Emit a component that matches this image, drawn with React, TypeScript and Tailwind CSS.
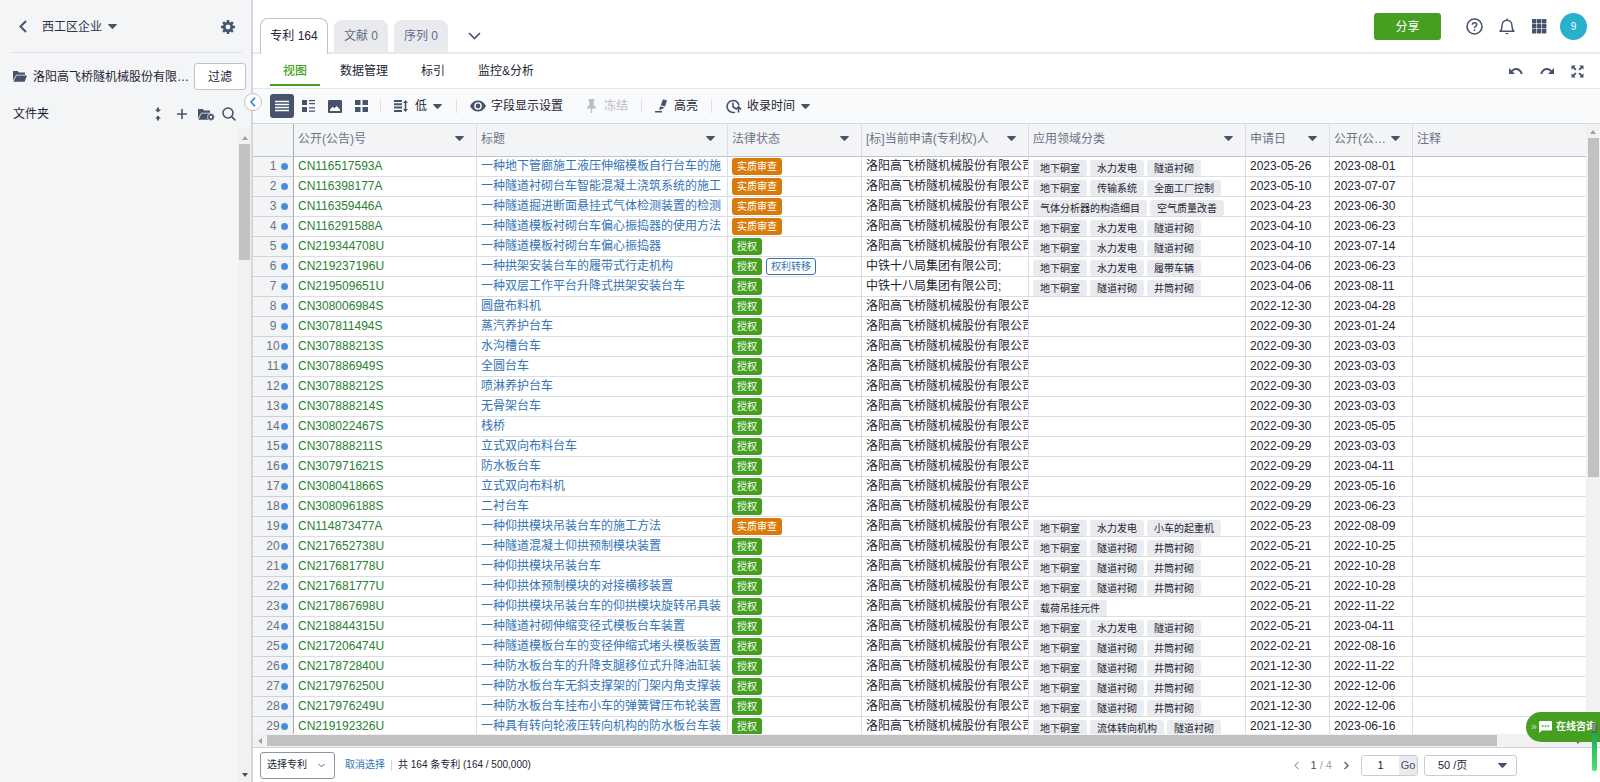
import { ReactNode } from 'react';
import { ChevronDown, ChevronLeft, ChevronRight } from 'lucide-react';

type Status = '实质审查' | '授权';

type Patent = {
  no: string;
  title: string;
  status: Status;
  transferred?: boolean;
  applicant: string;
  fields: string[];
  applied: string;
  published: string;
};

const GAOFEI = '洛阳高飞桥隧机械股份有限公司';
const CRCC = '中铁十八局集团有限公司;';

const ROOM = '地下硐室';
const HYDRO = '水力发电';
const LINING = '隧道衬砌';
const SHAFT = '井筒衬砌';

function patent(
  no: string,
  title: string,
  applied: string,
  published: string,
  fields: string[] = [],
  extra: Partial<Patent> = {},
): Patent {
  return { no, title, applied, published, fields, status: '授权', applicant: GAOFEI, ...extra };
}

const patents: Patent[] = [
  patent('CN116517593A', '一种地下管廊施工液压伸缩模板自行台车的施', '2023-05-26', '2023-08-01', [ROOM, HYDRO, LINING], { status: '实质审查' }),
  patent('CN116398177A', '一种隧道衬砌台车智能混凝土浇筑系统的施工', '2023-05-10', '2023-07-07', [ROOM, '传输系统', '全面工厂控制'], { status: '实质审查' }),
  patent('CN116359446A', '一种隧道掘进断面悬挂式气体检测装置的检测', '2023-04-23', '2023-06-30', ['气体分析器的构造细目', '空气质量改善'], { status: '实质审查' }),
  patent('CN116291588A', '一种隧道模板衬砌台车偏心振捣器的使用方法', '2023-04-10', '2023-06-23', [ROOM, HYDRO, LINING], { status: '实质审查' }),
  patent('CN219344708U', '一种隧道模板衬砌台车偏心振捣器', '2023-04-10', '2023-07-14', [ROOM, HYDRO, LINING]),
  patent('CN219237196U', '一种拱架安装台车的履带式行走机构', '2023-04-06', '2023-06-23', [ROOM, HYDRO, '履带车辆'], { transferred: true, applicant: CRCC }),
  patent('CN219509651U', '一种双层工作平台升降式拱架安装台车', '2023-04-06', '2023-08-11', [ROOM, LINING, SHAFT], { applicant: CRCC }),
  patent('CN308006984S', '圆盘布料机', '2022-12-30', '2023-04-28'),
  patent('CN307811494S', '蒸汽养护台车', '2022-09-30', '2023-01-24'),
  patent('CN307888213S', '水沟槽台车', '2022-09-30', '2023-03-03'),
  patent('CN307886949S', '全圆台车', '2022-09-30', '2023-03-03'),
  patent('CN307888212S', '喷淋养护台车', '2022-09-30', '2023-03-03'),
  patent('CN307888214S', '无骨架台车', '2022-09-30', '2023-03-03'),
  patent('CN308022467S', '栈桥', '2022-09-30', '2023-05-05'),
  patent('CN307888211S', '立式双向布料台车', '2022-09-29', '2023-03-03'),
  patent('CN307971621S', '防水板台车', '2022-09-29', '2023-04-11'),
  patent('CN308041866S', '立式双向布料机', '2022-09-29', '2023-05-16'),
  patent('CN308096188S', '二衬台车', '2022-09-29', '2023-06-23'),
  patent('CN114873477A', '一种仰拱模块吊装台车的施工方法', '2022-05-23', '2022-08-09', [ROOM, HYDRO, '小车的起重机'], { status: '实质审查' }),
  patent('CN217652738U', '一种隧道混凝土仰拱预制模块装置', '2022-05-21', '2022-10-25', [ROOM, LINING, SHAFT]),
  patent('CN217681778U', '一种仰拱模块吊装台车', '2022-05-21', '2022-10-28', [ROOM, LINING, SHAFT]),
  patent('CN217681777U', '一种仰拱体预制模块的对接横移装置', '2022-05-21', '2022-10-28', [ROOM, LINING, SHAFT]),
  patent('CN217867698U', '一种仰拱模块吊装台车的仰拱模块旋转吊具装', '2022-05-21', '2022-11-22', ['载荷吊挂元件']),
  patent('CN218844315U', '一种隧道衬砌伸缩变径式模板台车装置', '2022-05-21', '2023-04-11', [ROOM, HYDRO, LINING]),
  patent('CN217206474U', '一种隧道模板台车的变径伸缩式堵头模板装置', '2022-02-21', '2022-08-16', [ROOM, LINING, SHAFT]),
  patent('CN217872840U', '一种防水板台车的升降支腿移位式升降油缸装', '2021-12-30', '2022-11-22', [ROOM, LINING, SHAFT]),
  patent('CN217976250U', '一种防水板台车无斜支撑架的门架内角支撑装', '2021-12-30', '2022-12-06', [ROOM, LINING, SHAFT]),
  patent('CN217976249U', '一种防水板台车挂布小车的弹簧臂压布轮装置', '2021-12-30', '2022-12-06', [ROOM, LINING, SHAFT]),
  patent('CN219192326U', '一种具有转向轮液压转向机构的防水板台车装', '2021-12-30', '2023-06-16', [ROOM, '流体转向机构', LINING]),
];

const columns = [
  { label: '公开(公告)号', sortable: true },
  { label: '标题', sortable: true },
  { label: '法律状态', sortable: true },
  { label: '[标]当前申请(专利权)人', sortable: true },
  { label: '应用领域分类', sortable: true },
  { label: '申请日', sortable: true },
  { label: '公开(公…', sortable: true },
  { label: '注释', sortable: false },
];

function Caret() {
  return (
    <svg width="9" height="5" viewBox="0 0 9 5" className="shrink-0" fill="#47536d">
      <path d="M.8 0h7.4c.6 0 .8.6.4 1L5.2 4.6c-.4.4-1 .4-1.4 0L.4 1C0 .6.2 0 .8 0z" />
    </svg>
  );
}

function IconButton({ label, className = '', children }: { label: string; className?: string; children: ReactNode }) {
  return (
    <button type="button" aria-label={label} className={`flex shrink-0 items-center justify-center text-[#47536d] ${className}`}>
      {children}
    </button>
  );
}

function GearIcon() {
  return (
    <svg width="14" height="14" viewBox="0 0 14 14">
      <circle cx="7" cy="7" r="3.8" fill="none" stroke="currentColor" strokeWidth="2.8" />
      <g stroke="currentColor" strokeWidth="2.6">
        <path d="M7 0v2.4M7 11.6V14M0 7h2.4M11.6 7H14M2.1 2.1l1.6 1.6M10.3 10.3l1.6 1.6M11.9 2.1l-1.6 1.6M3.7 10.3l-1.6 1.6" />
      </g>
    </svg>
  );
}

function FolderOpenIcon({ gear = false }: { gear?: boolean }) {
  return (
    <svg width={gear ? 17 : 14} height="13" viewBox={gear ? '0 0 17 13' : '0 0 14 13'} fill="currentColor">
      <path d="M0 1h4.800l1.200 1.500H12v2.300H3.200L0 10.500z" />
      <path d="M3.500 5.500H14l-2.400 6.300H.4z" />
      {gear && (
        <>
          <circle cx="13" cy="9" r="3.800" fill="#f4f5f7" />
          <circle cx="13" cy="9" r="2" fill="none" stroke="currentColor" strokeWidth="1.500" />
          <path
            d="M13 5.600v1.200M13 11.200v1.200M9.600 9h1.200M15.200 9h1.200M10.600 6.600l.9.9M14.500 10.500l.9.9M15.400 6.600l-.9.9M11.500 10.500l-.9.9"
            stroke="currentColor"
            strokeWidth="1.400"
          />
        </>
      )}
    </svg>
  );
}

function Sidebar() {
  return (
    <aside className="relative flex w-[253px] shrink-0 flex-col border-r-2 border-[#d3d6dc] bg-[#f4f5f7]">
      <div className="ml-[11px] mr-[9px] flex h-[53px] shrink-0 items-center border-b border-[#dfe1e5] pl-1 pr-[7px] pt-px">
        <IconButton label="返回" className="w-4">
          <svg width="8" height="13" viewBox="0 0 8 13" fill="none" stroke="currentColor" strokeWidth="2">
            <path d="M7 1L1.5 6.500 7 12" />
          </svg>
        </IconButton>
        <button type="button" className="ml-[11px] flex items-center gap-[6px] text-[#2b3448]">
          西工区企业
          <Caret />
        </button>
        <IconButton label="设置" className="ml-auto">
          <GearIcon />
        </IconButton>
      </div>

      <div className="mt-[10px] flex h-[27px] shrink-0 items-center pl-[13px] pr-[5px]">
        <span className="text-[#47536d]"><FolderOpenIcon /></span>
        <span className="ml-[6px] flex-1 whitespace-nowrap text-[#1d2433]">洛阳高飞桥隧机械股份有限…</span>
        <button type="button" className="h-[27px] w-[52px] rounded-[3px] border border-[#bfc3cc] bg-white text-[#1d2433]">
          过滤
        </button>
      </div>

      <div className="mt-[10px] flex h-7 shrink-0 items-center pl-[13px] pr-[15px] text-[#1d2433]">
        文件夹
        <div className="ml-auto flex items-center">
          <IconButton label="折叠全部" className="mr-[14px]">
            <svg width="8" height="14" viewBox="0 0 8 14" fill="currentColor">
              <path d="M4 5.500L1 2.500h2V.5h2v2h2zM4 8.500l3 3H5v2H3v-2H1z" />
            </svg>
          </IconButton>
          <IconButton label="新建文件夹" className="mr-[10px]">
            <svg width="12" height="12" viewBox="0 0 12 12" stroke="currentColor" strokeWidth="1.600">
              <path d="M6 1v10M1 6h10" />
            </svg>
          </IconButton>
          <IconButton label="管理文件夹" className="mr-[7px]">
            <FolderOpenIcon gear />
          </IconButton>
          <IconButton label="搜索">
            <svg width="14" height="14" viewBox="0 0 14 14" fill="none" stroke="currentColor" strokeWidth="1.600">
              <circle cx="6" cy="6" r="5" />
              <path d="M9.600 9.600l3.800 3.800" />
            </svg>
          </IconButton>
        </div>
      </div>

      {/* folder tree scrollbar */}
      <div className="ml-auto flex w-[13px] flex-1 flex-col items-center bg-[#f1f1f1] pb-[5px] pt-1">
        <svg width="6" height="4" viewBox="0 0 6 4" fill="#a0a0a0" className="mt-1"><path d="M3 0l3 4H0z" /></svg>
        <div className="mt-1 h-[116px] w-[11px] bg-[#c1c1c1]" />
        <svg width="6" height="4" viewBox="0 0 6 4" fill="#505050" className="mt-auto"><path d="M3 4l3-4H0z" /></svg>
      </div>

      <button
        type="button"
        aria-label="收起侧栏"
        className="absolute -right-[11px] top-[93px] z-10 flex h-[18px] w-[18px] items-center justify-center rounded-full border border-[#bfc3cc] bg-white text-[#2d7cc7]"
      >
        <svg width="6" height="10" viewBox="0 0 6 10" fill="none" stroke="currentColor" strokeWidth="1.600">
          <path d="M5 .8L1 5l4 4.200" />
        </svg>
      </button>
    </aside>
  );
}

function TopBar() {
  return (
    <header className="flex h-[54px] shrink-0 items-end justify-between border-b-2 border-[#e8e9ec] pl-[7px] pr-[13px]">
      <nav className="-mb-[2px] flex items-end">
        <button type="button" className="h-9 w-[68px] rounded-t-lg border border-b-0 border-[#bfc3cc] bg-white pb-[2px] text-[#1d2433]">
          专利 164
        </button>
        <button type="button" className="mb-[2px] ml-[6px] h-8 w-[54px] rounded-t-lg bg-[#e9eaee] text-[#616c84]">
          文献 0
        </button>
        <button type="button" className="mb-[2px] ml-[6px] h-8 w-[54px] rounded-t-lg bg-[#e9eaee] text-[#616c84]">
          序列 0
        </button>
        <IconButton label="更多" className="mb-[2px] ml-5 h-8">
          <svg width="13" height="8" viewBox="0 0 13 8" fill="none" stroke="currentColor" strokeWidth="1.700">
            <path d="M1 1l5.500 5.500L12 1" />
          </svg>
        </IconButton>
      </nav>

      <div className="flex h-[52px] items-center pt-px">
        <button type="button" className="mr-[25px] h-[27px] w-[67px] rounded-[3px] bg-[#45a022] text-white">
          分享
        </button>
        <IconButton label="帮助" className="mr-4">
          <svg width="17" height="17" viewBox="0 0 17 17" fill="none" stroke="currentColor" strokeWidth="1.600">
            <circle cx="8.500" cy="8.500" r="7.500" />
            <path d="M6.300 6.800c0-1.300 1-2.100 2.200-2.100s2.200.8 2.200 2c0 1.500-2.200 1.700-2.200 3.300M8.500 11.300v1.500" />
          </svg>
        </IconButton>
        <IconButton label="通知" className="mr-[17px]">
          <svg width="16" height="17" viewBox="0 0 16 17" fill="none" stroke="currentColor" strokeWidth="1.500">
            <path d="M8 .5V2M1 13.300h14c-1.500-1.200-2-2.500-2-5.300C13 4.600 11 2.200 8 2.200S3 4.600 3 8c0 2.800-.5 4.100-2 5.300z" strokeLinejoin="round" />
            <path d="M6 15h4l-2 1.500z" fill="currentColor" stroke="none" />
          </svg>
        </IconButton>
        <IconButton label="应用" className="mr-[13px]">
          <svg width="15" height="15" viewBox="0 0 15 15" fill="currentColor">
            {[0, 5, 10].map((y) => [0, 5, 10].map((x) => <rect key={`${x}-${y}`} x={x} y={y} width="4.400" height="4.400" rx=".6" />))}
          </svg>
        </IconButton>
        <button type="button" className="h-[27px] w-[27px] rounded-full bg-[#27b1ca] text-[10px] text-white">9</button>
      </div>
    </header>
  );
}

function SubTabs() {
  return (
    <div className="flex h-[35px] shrink-0 items-stretch justify-between border-b border-[#e4e6ea] pl-[17px] pr-4 text-[#1d2433]">
      <nav className="flex gap-[7px]">
        <button type="button" className="mb-[2px] border-b-2 border-[#45a022] px-[13px] pt-1 font-medium text-[#45a022]">视图</button>
        <button type="button" className="px-[13px]">数据管理</button>
        <button type="button" className="px-[13px]">标引</button>
        <button type="button" className="px-[13px]">监控&amp;分析</button>
      </nav>
      <div className="flex items-center">
        <IconButton label="撤销" className="mr-[17px]">
          <svg width="14" height="8" viewBox="0 0 14 8">
            <path d="M2.500 4.500C5 1 10.500.6 12.800 7" fill="none" stroke="currentColor" strokeWidth="2" />
            <path d="M0 1v6h6z" fill="currentColor" />
          </svg>
        </IconButton>
        <IconButton label="重做" className="mr-[17px]">
          <svg width="14" height="8" viewBox="0 0 14 8">
            <path d="M11.500 4.500C9 1 3.500.6 1.200 7" fill="none" stroke="currentColor" strokeWidth="2" />
            <path d="M14 1v6H8z" fill="currentColor" />
          </svg>
        </IconButton>
        <IconButton label="全屏">
          <svg width="13" height="13" viewBox="0 0 13 13" fill="currentColor">
            <path d="M.5.5h4.200L3.300 1.900l2.300 2.300-1.400 1.400-2.300-2.300L.5 4.700zM12.500.5v4.200l-1.400-1.400-2.300 2.300-1.400-1.400 2.300-2.300L8.300.5zM.5 12.500V8.300l1.400 1.400 2.300-2.300 1.400 1.400-2.300 2.300 1.400 1.400zM12.500 12.500H8.300l1.400-1.400-2.300-2.300 1.400-1.400 2.300 2.300 1.400-1.400z" />
          </svg>
        </IconButton>
      </div>
    </div>
  );
}

function Divider({ className = '' }: { className?: string }) {
  return <span className={`h-[14px] w-px shrink-0 bg-[#dfe1e5] ${className}`} />;
}

function Toolbar() {
  return (
    <div className="flex h-[34px] shrink-0 items-center bg-[#f9fafc] pl-[17px] text-[#1d2433]">
      <button type="button" aria-label="列表视图" className="flex h-6 w-6 items-center justify-center rounded-[3px] bg-[#47536d]">
        <svg width="14" height="13" viewBox="0 0 14 13" stroke="#fff" strokeWidth="1.300">
          <path d="M0 1.500h14M0 4.500h14M0 7.500h14M0 10.500h14" />
        </svg>
      </button>
      <IconButton label="图文视图" className="ml-2">
        <svg width="13" height="12" viewBox="0 0 13 12" fill="currentColor">
          <path d="M0 0h5v5H0zM0 7h5v5H0zM7 0h6v1.300H7zM7 3h6v1.300H7zM7 7.300h6v1.300H7zM7 10.500h6v1.300H7z" />
        </svg>
      </IconButton>
      <IconButton label="图片视图" className="ml-[13px]">
        <svg width="14" height="13" viewBox="0 0 14 13">
          <rect width="14" height="13" rx="1.200" fill="currentColor" />
          <path d="M2 11V9.500l2.500-2.800 1.800 1.500L8.700 6 12 9.500V11z" fill="#fff" />
        </svg>
      </IconButton>
      <IconButton label="网格视图" className="ml-[13px]">
        <svg width="13" height="12" viewBox="0 0 13 12" fill="currentColor">
          <path d="M0 0h5.500v5H0zM7.500 0H13v5H7.500zM0 7h5.500v5H0zM7.500 7H13v5H7.500z" />
        </svg>
      </IconButton>
      <Divider className="ml-3" />
      <button type="button" className="ml-[13px] flex items-center">
        <svg width="14" height="12" viewBox="0 0 14 12" fill="#47536d">
          <path d="M0 0h8v2H0zM0 3.300h8v2H0zM0 6.600h8v2H0zM0 10h8v2H0zM11.500 0L14 3h-1.700v6H14l-2.500 3L9 9h1.700V3H9z" />
        </svg>
        <span className="ml-[7px] mr-[6px]">低</span>
        <Caret />
      </button>
      <Divider className="ml-[14px]" />
      <button type="button" className="ml-[13px] flex items-center">
        <svg width="16" height="12" viewBox="0 0 16 12">
          <path d="M0 6C2 2.200 4.800.5 8 .5s6 1.700 8 5.500c-2 3.800-4.800 5.500-8 5.500S2 9.800 0 6z" fill="#47536d" />
          <circle cx="8" cy="6" r="3.100" fill="#47536d" stroke="#fff" strokeWidth="1.400" />
        </svg>
        <span className="ml-[5px]">字段显示设置</span>
      </button>
      <button type="button" disabled className="ml-6 flex items-center text-[#b9bdc6]">
        <svg width="9" height="14" viewBox="0 0 9 14" fill="currentColor">
          <path d="M1.500 0h6v1.500h-.8V6L9 8.500v1H5.200V14H3.800V9.500H0v-1L2.300 6V1.500h-.8z" />
        </svg>
        <span className="ml-2">冻结</span>
      </button>
      <Divider className="ml-[13px]" />
      <button type="button" className="ml-[13px] flex items-center">
        <svg width="13" height="14" viewBox="0 0 13 14" fill="#47536d">
          <path d="M8 .3l4 1.200-2 6-4.200-1.200zM5.400 7.200l4 1.200-1.900 1.300-1.900 1-1.600-.5zM0 12h7v1.600H0z" />
        </svg>
        <span className="ml-[6px]">高亮</span>
      </button>
      <Divider className="ml-[13px]" />
      <button type="button" className="ml-[14px] flex items-center">
        <svg width="16" height="15" viewBox="0 0 16 15" fill="none" stroke="#47536d" strokeWidth="1.600">
          <path d="M9 13.200A6 6 0 1 1 13 6.500" />
          <path d="M7 3.500V8l3 1.800" />
          <path d="M12.500 13.500V8.500M9.800 10.500l2.700-2.700 2.700 2.700" />
        </svg>
        <span className="ml-[5px] mr-[6px]">收录时间</span>
        <Caret />
      </button>
    </div>
  );
}

function StatusBadge({ status }: { status: Status }) {
  return (
    <span
      className={`inline-flex h-[17px] items-center rounded-[3px] px-[5px] text-[10px] text-white ${
        status === '授权' ? 'bg-[#45a022]' : 'bg-[#d97b0b]'
      }`}
    >
      {status}
    </span>
  );
}

function PatentRow({ index, patent }: { index: number; patent: Patent }) {
  const cell = 'h-5 overflow-hidden whitespace-nowrap border-b border-r border-[#dcdee3] p-0 pl-1 leading-[19px] align-top';
  return (
    <tr>
      <th scope="row" className="h-5 border-b border-r border-b-[#cfd2d8] border-r-[#a9adb6] bg-[#f3f4f6] p-0 align-top font-normal leading-[19px] text-[#6b7280]">
        <span className="flex items-center justify-end pr-[5px]">
          <span className="w-4 text-center">{index}</span>
          <span className="h-[7px] w-[7px] rounded-full bg-[#4a8cdb]" />
        </span>
      </th>
      <td className={cell}>
        <a href="#" className="text-[#2c8035]">{patent.no}</a>
      </td>
      <td className={cell}>
        <a href="#" className="text-[#3573b5]">{patent.title}</a>
      </td>
      <td className={cell}>
        <div className="flex gap-1 pt-px">
          <StatusBadge status={patent.status} />
          {patent.transferred && (
            <span className="inline-flex h-[17px] items-center rounded-[3px] border border-[#3573b5] px-1 text-[10px] text-[#3573b5]">
              权利转移
            </span>
          )}
        </div>
      </td>
      <td className={`${cell} text-[#1d2433]`}>{patent.applicant}</td>
      <td className={cell}>
        <div className="flex gap-[3px] pt-[3px]">
          {patent.fields.map((field) => (
            <span key={field} className="flex h-4 items-center rounded-[3px] bg-[#e9ebef] px-[7px] text-[10px] text-[#1d2433]">
              {field}
            </span>
          ))}
        </div>
      </td>
      <td className={`${cell} text-[#1d2433]`}>{patent.applied}</td>
      <td className={`${cell} text-[#1d2433]`}>{patent.published}</td>
      <td className={`${cell} border-r-0`} />
    </tr>
  );
}

function PatentTable() {
  return (
    <div className="flex min-h-0 flex-1 border-t border-[#d3d6dc]">
      <div className="flex min-w-0 flex-1 flex-col">
        <div className="min-h-0 flex-1 overflow-hidden">
          <table className="w-full table-fixed border-separate border-spacing-0">
            <colgroup>
              <col className="w-[41px]" />
              <col className="w-[183px]" />
              <col className="w-[251px]" />
              <col className="w-[134px]" />
              <col className="w-[167px]" />
              <col className="w-[217px]" />
              <col className="w-[84px]" />
              <col className="w-[83px]" />
              <col />
            </colgroup>
            <thead>
              <tr className="bg-[#f3f4f6] text-left text-[#6b7588]">
                <td className="h-[33px] border-b border-r border-b-[#bfc3cc] border-r-[#a9adb6]" />
                {columns.map((column) => (
                  <th key={column.label} className="h-[33px] border-b border-r border-b-[#bfc3cc] border-r-[#dcdee3] p-0 pb-[3px] pl-1 font-normal last:border-r-0">
                    <div className="flex items-center justify-between whitespace-nowrap pr-3">
                      {column.label}
                      {column.sortable && <Caret />}
                    </div>
                  </th>
                ))}
              </tr>
            </thead>
            <tbody>
              {patents.map((patent, i) => (
                <PatentRow key={patent.no} index={i + 1} patent={patent} />
              ))}
            </tbody>
          </table>
        </div>
        <div className="flex h-[13px] shrink-0 items-center bg-[#f1f1f1] pl-[5px] pr-[5px]">
          <svg width="4" height="6" viewBox="0 0 4 6" fill="#a0a0a0"><path d="M4 0v6L0 3z" /></svg>
          <div className="ml-[5px] h-[11px] w-[93%] bg-[#c1c1c1]" />
          <svg width="4" height="6" viewBox="0 0 4 6" fill="#505050" className="ml-auto"><path d="M0 0v6l4-3z" /></svg>
        </div>
      </div>
      <div className="flex w-[14px] shrink-0 flex-col items-center bg-[#f1f1f1] pt-[6px]">
        <svg width="6" height="4" viewBox="0 0 6 4" fill="#a0a0a0"><path d="M3 0l3 4H0z" /></svg>
        <div className="mt-1 h-[55%] w-[11px] bg-[#c1c1c1]" />
      </div>
    </div>
  );
}

function Footer() {
  return (
    <footer className="flex h-[35px] shrink-0 items-center border-t border-[#d3d6dc] pl-[7px] text-[10px] text-[#1d2433]">
      <div className="relative">
        <select aria-label="选择专利" className="h-[27px] w-[75px] appearance-none rounded-[3px] border border-[#8d94a3] bg-white pl-[6px]">
          <option>选择专利</option>
        </select>
        <ChevronDown size={11} className="pointer-events-none absolute right-2 top-2 text-[#47536d]" />
      </div>
      <a href="#" className="ml-[10px] text-[#3573b5]">取消选择</a>
      <span className="ml-[6px] h-[11px] w-px bg-[#d3d6dc]" />
      <span className="ml-[6px]">共 164 条专利 (164 / 500,000)</span>

      <div className="ml-auto mr-[83px] flex items-center text-[11px]">
        <IconButton label="上一页" className="opacity-50">
          <ChevronLeft size={13} />
        </IconButton>
        <span className="mx-[8px] text-[#9aa1af]"><span className="text-[#47536d]">1</span> / 4</span>
        <IconButton label="下一页">
          <ChevronRight size={13} />
        </IconButton>
        <div className="ml-2 flex h-[21px] w-[57px] overflow-hidden rounded-[3px] border border-[#c9ccd3]">
          <input aria-label="页码" defaultValue="1" className="w-[37px] bg-white text-center outline-none" />
          <button type="button" className="flex-1 bg-[#e9eaee] text-[#47536d]">Go</button>
        </div>
        <div className="relative ml-[6px]">
          <select aria-label="每页条数" className="h-[21px] w-[93px] appearance-none rounded-[3px] border border-[#c9ccd3] bg-white pl-[13px]">
            <option>50 /页</option>
          </select>
          <span className="pointer-events-none absolute right-[10px] top-2"><Caret /></span>
        </div>
      </div>
    </footer>
  );
}

function ChatButton() {
  return (
    <div className="absolute bottom-[11px] right-0 h-[59px] w-[74px]">
      <button type="button" className="flex h-[30px] w-full items-center overflow-hidden whitespace-nowrap rounded-l-full bg-[#45a022] pl-[3px] text-[10px] font-bold text-white">
        <span className="w-[10px] font-normal opacity-70">»</span>
        <svg width="13" height="12" viewBox="0 0 13 12" className="shrink-0">
          <path d="M1 0h11a1 1 0 0 1 1 1v7.500a1 1 0 0 1-1 1H3L0 12V1a1 1 0 0 1 1-1z" fill="#fff" />
          <path d="M3 4.200h1.500v1.500H3zM5.800 4.200h1.500v1.500H5.800zM8.600 4.200h1.500v1.500H8.600z" fill="#45a022" />
        </svg>
        <span className="ml-1">在线咨询</span>
      </button>
      <span className="absolute bottom-0 right-[3px] flex h-[49px] w-[5px] flex-col overflow-hidden rounded-full">
        <span className="h-[11px] bg-[#4b5a4b]/60" />
        <span className="flex-1 bg-linear-to-b from-[#16a85a] to-[#4be36a]" />
      </span>
    </div>
  );
}

export default function App() {
  return (
    <div className="relative flex h-screen overflow-hidden bg-white font-['Liberation_Sans','Noto_Sans_CJK_SC',sans-serif] text-xs">
      <Sidebar />
      <main className="flex min-w-0 flex-1 flex-col">
        <TopBar />
        <SubTabs />
        <Toolbar />
        <PatentTable />
        <Footer />
      </main>
      <ChatButton />
    </div>
  );
}
